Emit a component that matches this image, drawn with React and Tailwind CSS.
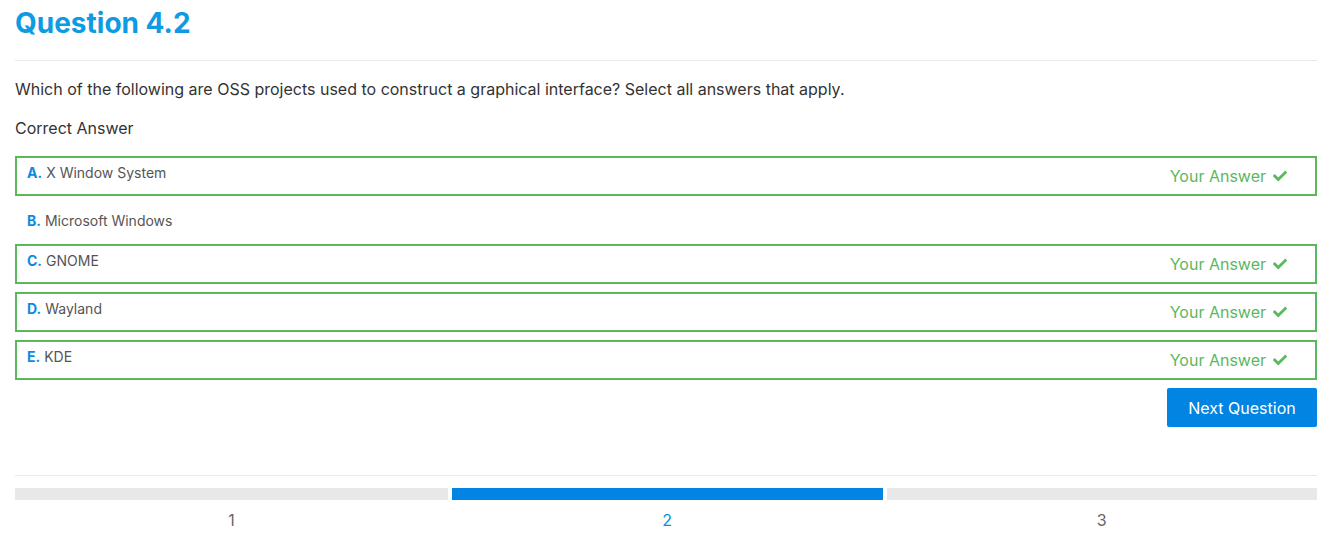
import { FaCheck } from 'react-icons/fa'

const options = [
  { key: 'A', text: 'X Window System', correct: true },
  { key: 'B', text: 'Microsoft Windows', correct: false },
  { key: 'C', text: 'GNOME', correct: true },
  { key: 'D', text: 'Wayland', correct: true },
  { key: 'E', text: 'KDE', correct: true },
]

function Option({ option }) {
  if (!option.correct) {
    return (
      <div className="flex h-[48px] items-center px-[12px] text-[14px] text-[#555]">
        <span className="mr-[4px] font-bold text-[#0a8ae2]">{option.key}.</span>
        {option.text}
      </div>
    )
  }
  return (
    <div className="flex h-[40px] items-start justify-between border-2 border-[#5cb85c] px-[10px]">
      <div className="pt-[4px] text-[14px] text-[#555]">
        <span className="mr-[4px] font-bold text-[#0a8ae2]">{option.key}.</span>
        {option.text}
      </div>
      <div className="flex items-center gap-[7px] self-center pr-[18px] text-[16px] text-[#5cb85c]">
        Your Answer
        <FaCheck size={14} />
      </div>
    </div>
  )
}

export default function App() {
  const steps = [1, 2, 3]
  const current = 2

  return (
    <div className="min-h-[545px] bg-white pr-[20px] pl-[15px] font-['Inter',sans-serif]">
      <h1 className="pt-[3px] text-[28px] leading-[40px] font-bold text-[#0d9be2]">Question 4.2</h1>
      <hr className="mt-[17px] border-t border-[#e9e9e9]" />
      <p className="mt-[17px] text-[16px] leading-[22px] text-[#333]">
        Which of the following are OSS projects used to construct a graphical interface? Select all answers that apply.
      </p>
      <p className="mt-[17px] text-[16px] leading-[22px] text-[#333]">Correct Answer</p>
      <div className="mt-[17px] flex flex-col">
        <Option option={options[0]} />
        <Option option={options[1]} />
        <div className="flex flex-col gap-[8px]">
          {options.slice(2).map((option) => (
            <Option key={option.key} option={option} />
          ))}
        </div>
      </div>
      <div className="mt-[8px] flex justify-end">
        <button className="h-[39px] w-[150px] rounded-[2px] bg-[#0284e2] text-[16px] text-white">Next Question</button>
      </div>
      <hr className="mt-[48px] border-t border-[#e9e9e9]" />
      <div className="mt-[12px] grid grid-cols-[433px_1fr_1fr] gap-[4px]">
        {steps.map((step) => (
          <div key={step} className="flex flex-col items-center">
            <div className={`h-[12px] w-full ${step === current ? 'bg-[#0284e2]' : 'bg-[#e8e8e8]'}`} />
            <div className={`mt-[9px] text-[16px] leading-[22px] ${step === current ? 'text-[#0a8ae2]' : 'text-[#666]'}`}>
              {step}
            </div>
          </div>
        ))}
      </div>
    </div>
  )
}
